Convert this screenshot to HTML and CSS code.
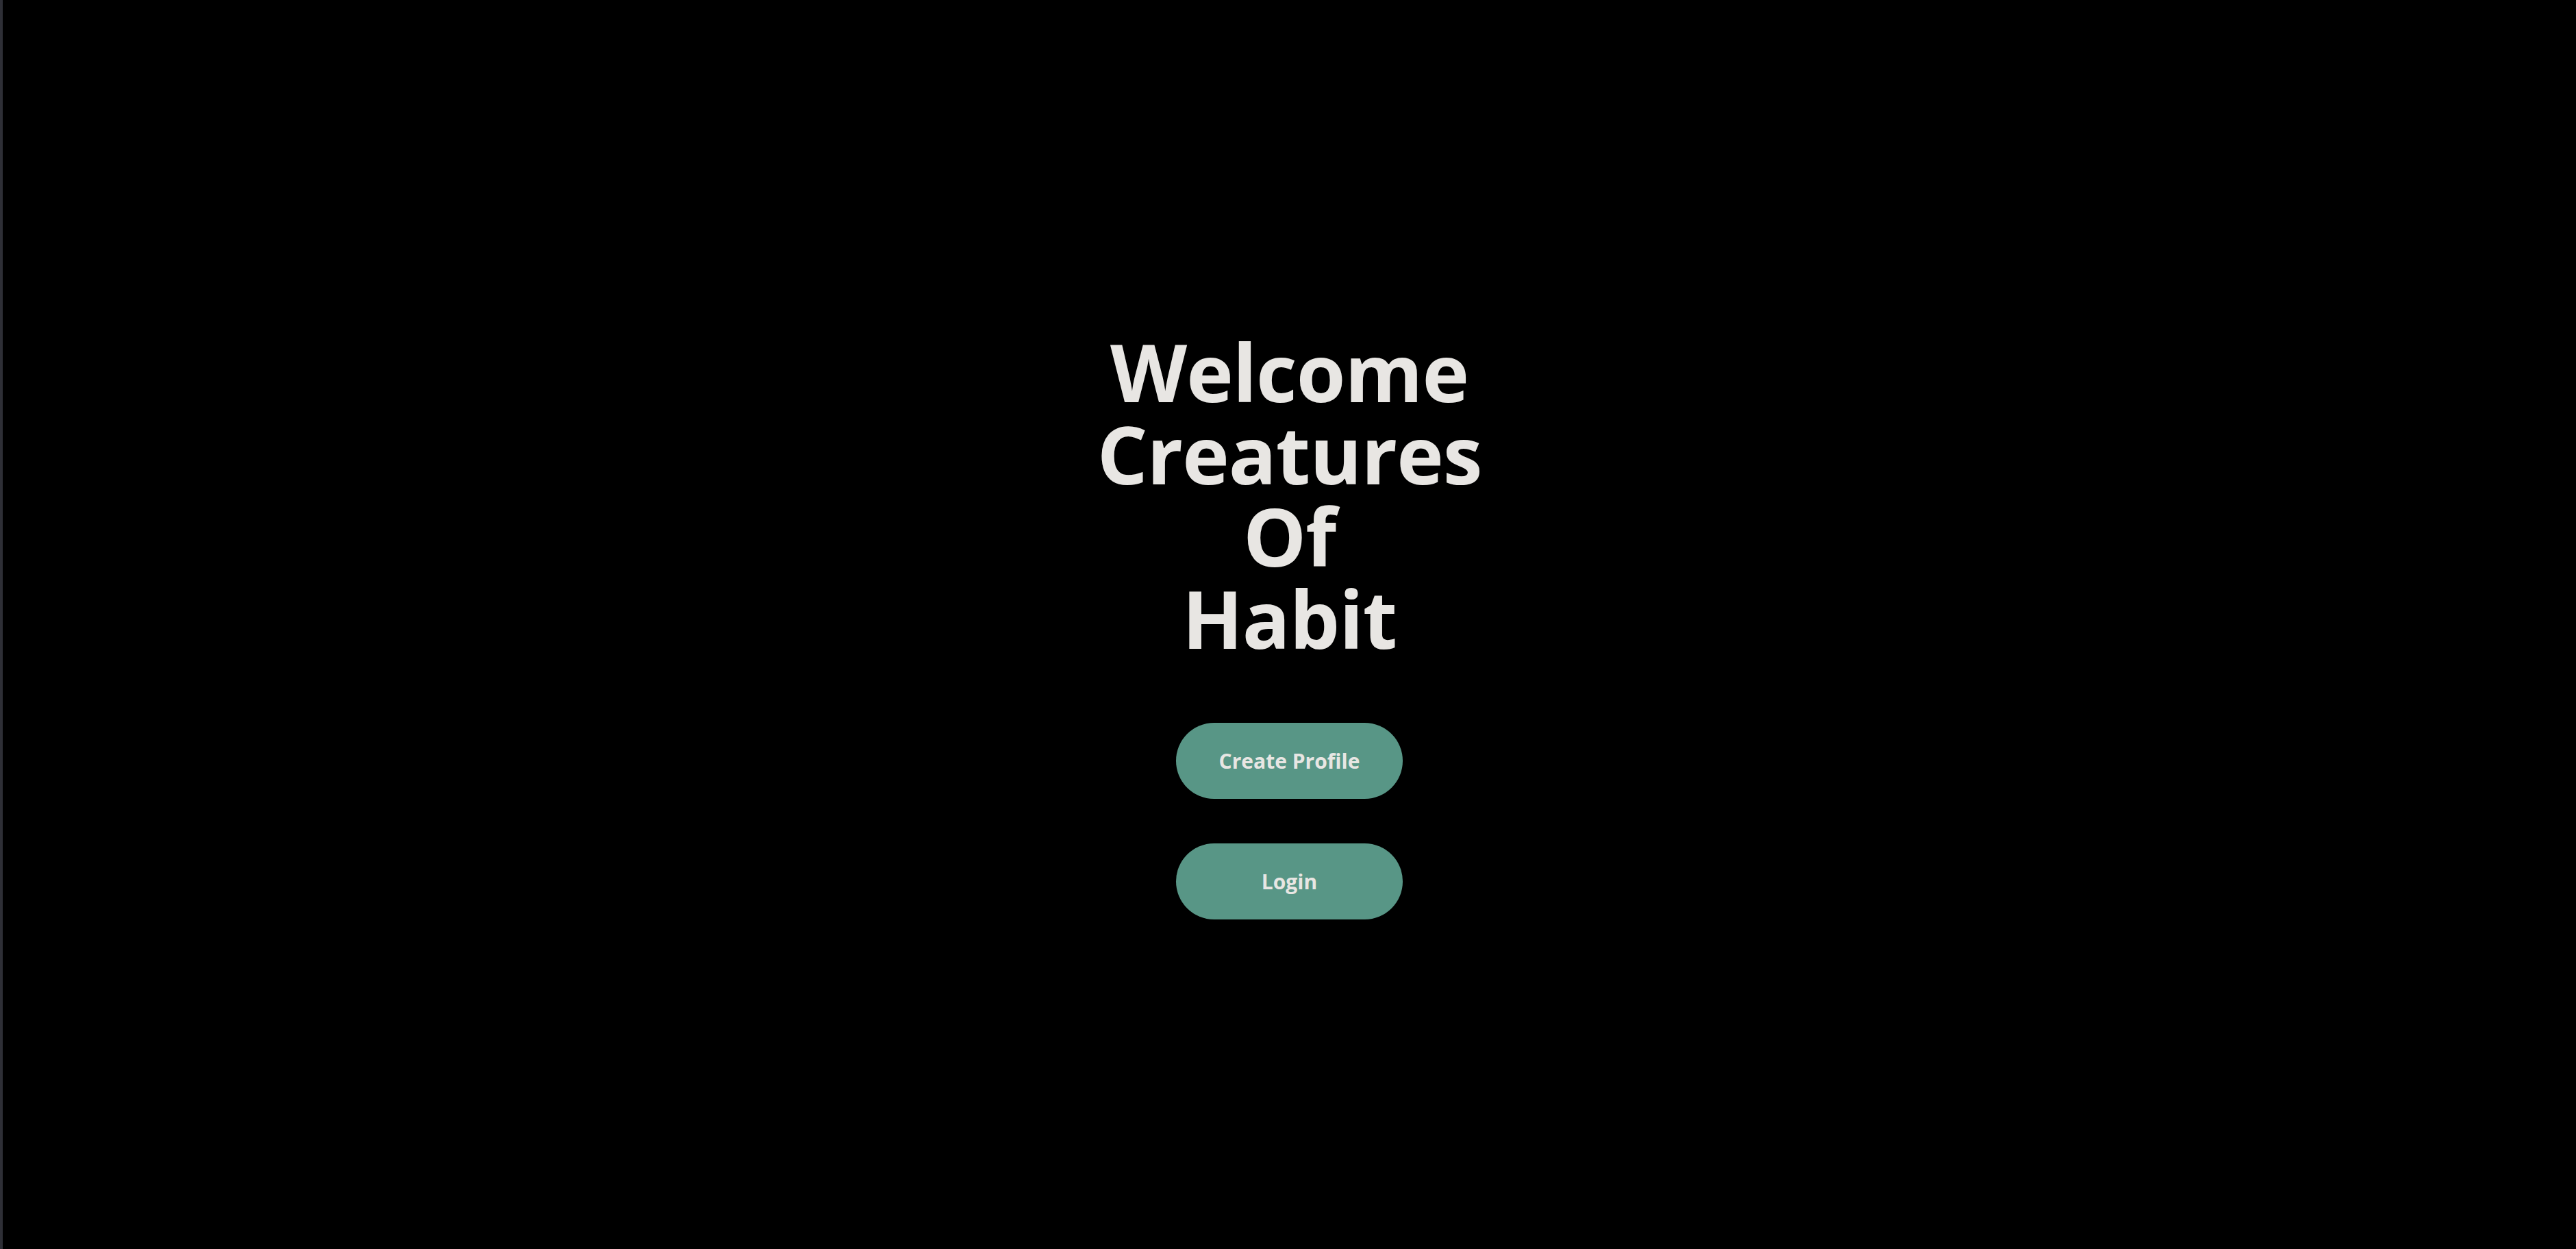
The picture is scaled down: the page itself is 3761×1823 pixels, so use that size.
FILE: index.html
```html
<!DOCTYPE html>
<html lang="en">
<head>
<meta charset="utf-8">
<title>Creatures Of Habit</title>
<link rel="stylesheet" href="styles.css">
</head>
<body>
<div class="edge"></div>
<main class="welcome">
  <h1 class="title">Welcome<br>Creatures<br>Of<br>Habit</h1>
  <div class="actions">
    <button class="pill">Create Profile</button>
    <button class="pill">Login</button>
  </div>
</main>
</body>
</html>
```

FILE: styles.css
```css
html, body {
  margin: 0;
  padding: 0;
  height: 100%;
  background: #000000;
}
body {
  display: flex;
  font-family: "Open Sans", "Noto Sans", sans-serif;
  overflow: hidden;
}
.edge {
  width: 4px;
  flex: 0 0 4px;
  background: #2e2f36;
}
.welcome {
  flex: 1;
  display: flex;
  flex-direction: column;
  align-items: center;
  justify-content: center;
  gap: 93px;
}
.title {
  margin: 0;
  color: #e8e6e3;
  font-size: 116px;
  line-height: 120px;
  letter-spacing: -1px;
  font-weight: 700;
  text-align: center;
}
.actions {
  display: flex;
  flex-direction: column;
  gap: 65px;
}
.pill {
  width: 331px;
  height: 111px;
  border: none;
  border-radius: 56px;
  background: #589686;
  color: #e8e6e3;
  font-family: "Open Sans", "Noto Sans", sans-serif;
  font-size: 30px;
  font-weight: 700;
  padding: 0;
}
```
